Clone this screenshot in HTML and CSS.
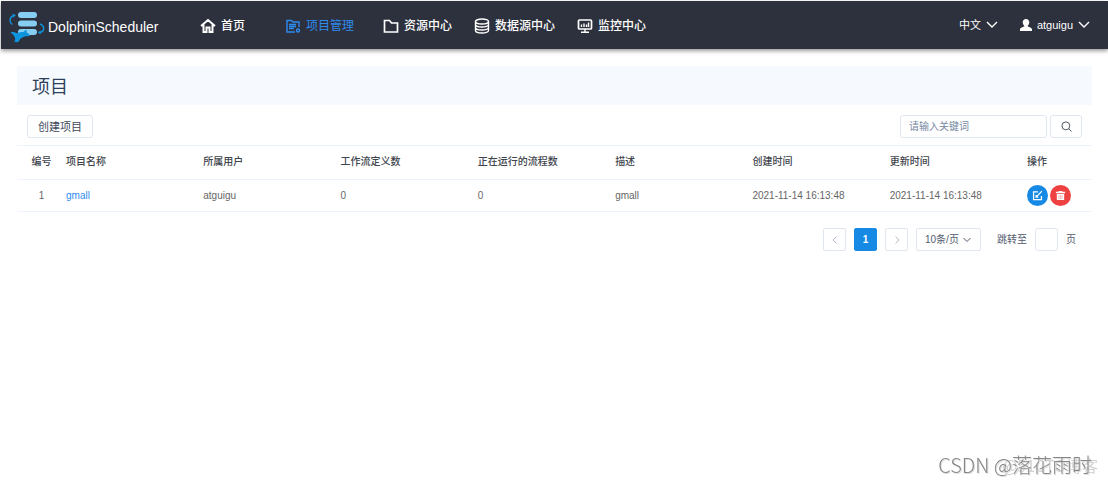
FILE: index.html
```html
<!DOCTYPE html>
<html lang="zh-CN">
<head>
<meta charset="utf-8">
<title>DolphinScheduler</title>
<meta name="viewport" content="width=device-width, initial-scale=1">
<link rel="stylesheet" href="styles.css">
</head>
<body>
<header class="topbar">
  <a class="brand" href="#">
    <svg class="brand-mark" viewBox="0 0 36 32" aria-hidden="true">
      <g fill="#86cdf2"><rect x="9" y="1" width="19" height="6" rx="3"/><rect x="9" y="9.500" width="19" height="6" rx="3"/><rect x="9" y="18" width="19" height="6" rx="3"/></g>
      <g fill="none" stroke="#0d94dc" stroke-width="1.400"><path d="M5 4.500C0 6 0 11.500 3.500 13.500"/><path d="M31 13c5 2 5 7.500-.5 8.500"/></g>
      <path fill="#0d94dc" d="M3.500 2.800l3.500 1.200-3 2.800zM31.500 19.500l-2.500 2 2.500 2z"/>
      <path fill="#0d94dc" d="M1.500 21.500c2.500-.8 4.500-.3 6 .8 2.500-1 4.500-1.300 7-1.300.8-1.200 2-2 3.500-2-.5.900-.6 1.700-.4 2.500 1.700.7 3 1.800 3.600 3.800-1.200-.3-2-.2-3 0-3.500.2-5.500 1.500-7.200 3-.5 1.500-1.500 2-2.500 3.200-.8-.6-1.800-.8-3.500-.7 1-1.200 1.300-2.300 1-3.800-1-2.500-2-4-4.500-5.500z"/>
    </svg>
    <span>DolphinScheduler</span>
  </a>
  <nav class="nav">
    <a class="nav-item nav-home" href="#">
      <svg class="icon" viewBox="0 0 16 16"><path d="M1 8l7-6 7 6M3.500 6.500V14h3v-4.500h3V14h3V6.500" stroke-width="2"/></svg>首页</a>
    <a class="nav-item nav-project active" href="#">
      <svg class="icon" viewBox="0 0 16 16"><path d="M14 9V4H8L6.500 2.500H2V14h8"/><path d="M4 6.500h7M4 8.500h7M4 10.500h5" stroke-width="1.300"/><circle cx="13" cy="12.500" r="1.500"/></svg>项目管理</a>
    <a class="nav-item" href="#">
      <svg class="icon" viewBox="0 0 16 16"><path d="M1.500 2.500h5L8.500 5h6v9h-13z" stroke-width="1.700"/></svg>资源中心</a>
    <a class="nav-item" href="#">
      <svg class="icon" viewBox="0 0 16 16"><ellipse cx="8" cy="3.500" rx="6.500" ry="2.500"/><path d="M1.500 3.500v9c0 3.300 13 3.300 13 0v-9M1.500 6.500c0 3.300 13 3.300 13 0M1.500 9.500c0 3.300 13 3.300 13 0"/></svg>数据源中心</a>
    <a class="nav-item" href="#">
      <svg class="icon" viewBox="0 0 16 16"><rect x="1.500" y="2" width="13" height="9" rx="1" stroke-width="1.700"/><path d="M4.500 9V6.500M7 9V5.500M9.500 9V6.500M11.500 9V4.500M8 11v3M4 14.200h8"/></svg>监控中心</a>
  </nav>
  <div class="account">
    <button class="menu" type="button">中文
      <svg class="caret" viewBox="0 0 12 8"><path d="M1 1l5 5 5-5"/></svg></button>
    <button class="menu" type="button">
      <svg class="person" viewBox="0 0 12 12"><path d="M6 0c2 0 3.300 1.300 3.300 3.300S8 6.500 7.500 7.200C8.500 8 12 8.500 12 10.500V12H0v-1.500C0 8.500 3.500 8 4.500 7.200 4 6.500 2.700 5.300 2.700 3.300S4 0 6 0z"/></svg>atguigu
      <svg class="caret" viewBox="0 0 12 8"><path d="M1 1l5 5 5-5"/></svg></button>
  </div>
</header>

<main class="page">
  <h1 class="title">项目</h1>
  <div class="toolbar">
    <button class="btn create" type="button">创建项目</button>
    <form class="search">
      <input class="field keyword" type="text" placeholder="请输入关键词" aria-label="请输入关键词">
      <button class="btn find" type="button" aria-label="搜索">
        <svg viewBox="0 0 12 12"><circle cx="5.300" cy="5.300" r="4.300"/><path d="M8.500 8.500l3 3"/></svg></button>
    </form>
  </div>
  <table class="projects">
    <colgroup><col class="col-no"><col><col><col><col><col><col><col><col class="col-ops"></colgroup>
    <thead>
      <tr><th>编号</th><th>项目名称</th><th>所属用户</th><th>工作流定义数</th><th>正在运行的流程数</th><th>描述</th><th>创建时间</th><th>更新时间</th><th>操作</th></tr>
    </thead>
    <tbody>
      <tr><td>1</td><td><a class="link" href="#">gmall</a></td><td>atguigu</td><td>0</td><td>0</td><td>gmall</td><td>2021-11-14 16:13:48</td><td>2021-11-14 16:13:48</td>
        <td><div class="ops">
          <button class="round edit" type="button" aria-label="编辑"><svg viewBox="0 0 12 12"><path d="M6.500 2H1.700v8.500h8.600V6.500M4.500 7.800L10.800 1.200M4.500 5.500v2.300h2.300"/></svg></button>
          <button class="round remove" type="button" aria-label="删除"><svg viewBox="0 0 12 12"><path fill="#fff" stroke="none" d="M4 1h4v1h3v1.600H1V2h3zM2 4.300h8V11H2z"/><path stroke="#f5a0a0" stroke-width=".8" d="M4.300 5.500v4.300M6 5.500v4.300M7.700 5.500v4.300"/></svg></button>
        </div></td></tr>
    </tbody>
  </table>
  <div class="pager">
    <button class="page-btn" type="button" aria-label="上一页"><svg viewBox="0 0 8 8"><path d="M5.500 0.500L2 4l3.500 3.500"/></svg></button>
    <button class="page-btn current" type="button">1</button>
    <button class="page-btn" type="button" aria-label="下一页"><svg viewBox="0 0 8 8"><path d="M2.500 0.500L6 4 2.500 7.500"/></svg></button>
    <div class="size-wrap">
      <select class="size" aria-label="每页条数"><option>10条/页</option></select>
      <svg class="size-caret" viewBox="0 0 8 8"><path d="M0.500 2L4 5.500 7.500 2"/></svg>
    </div>
    <label class="jump">跳转至 <input class="field page-no" type="text"> 页</label>
  </div>
</main>
<div class="watermark"><span class="mark-back">@51CTO博客</span><span class="mark-front">CSDN @落花雨时</span></div>
</body>
</html>
```

FILE: styles.css
```css
* { box-sizing: border-box; }
body {
  margin: 0;
  min-height: 100vh;
  background: #fff;
  color: #666;
  font: 10px/16px "Liberation Sans", "Noto Sans CJK SC", sans-serif;
}
button, input, select { font: inherit; color: inherit; margin: 0; }
button { cursor: pointer; }
a { color: inherit; text-decoration: none; }
svg { display: block; flex: none; fill: none; stroke: currentColor; }

.topbar {
  display: flex;
  align-items: center;
  height: 48px;
  margin: 1px 0 0 1px;
  padding: 0 18px 0 8px;
  background: #2d303d;
  color: #fff;
  box-shadow: 0 2px 4px rgba(0, 0, 0, .4);
}
.brand {
  display: flex;
  align-items: center;
  gap: 3px;
  width: 191px;
  font-size: 14px;
  line-height: 20px;
  padding-top: 3px;
}
.brand-mark { width: 36px; height: 32px; stroke: none; }
.nav { display: flex; gap: 22px; padding-top: 2px; font-size: 12px; font-weight: 500; }
.nav-item { display: flex; align-items: center; gap: 5px; }
.nav-home { margin-right: 18px; }
.nav-project { margin-right: 7px; }
.active { color: #2d8cf0; font-weight: 400; }
.icon { width: 16px; height: 16px; stroke-width: 1.4; }
.account { display: flex; gap: 22px; margin-left: auto; font-size: 11px; }
.menu {
  display: flex;
  align-items: center;
  gap: 5px;
  padding: 0;
  border: 0;
  background: none;
}
.caret { width: 12px; height: 8px; stroke-width: 1.4; }
.person { width: 12px; height: 12px; fill: #fff; stroke: none; }

.page { padding: 17px 16px 0 17px; }
.title {
  margin: 0;
  padding: 7px 15px 4px;
  background: #f6fafe;
  color: #2d4059;
  font-size: 18px;
  font-weight: 400;
  line-height: 28px;
}
.toolbar {
  display: flex;
  justify-content: space-between;
  padding: 10px 10px 7px;
}
.search { display: flex; gap: 3px; }
.btn, .field {
  height: 23px;
  border: 1px solid #e0e6f0;
  border-radius: 3px;
  background: #fff;
}
.btn { color: #40485b; }
.create { padding: 0 10px; font-size: 11px; }
.keyword { width: 147px; padding: 0 8px; }
.keyword::placeholder { color: #7588a3; opacity: 1; }
.find { display: grid; place-items: center; width: 32px; padding: 0; }
.find svg { width: 11px; height: 11px; }

.projects {
  width: 100%;
  table-layout: fixed;
  border-collapse: collapse;
  border-top: 1px solid #ecf3ff;
}
.col-no { width: 49px; }
.col-ops { width: 65px; }
.projects th, .projects td {
  padding: 0;
  border-bottom: 1px solid #ecf3ff;
  text-align: left;
  white-space: nowrap;
}
.projects th { height: 34px; color: #40444c; font-weight: 500; padding-bottom: 2px; }
.projects td { height: 32px; }
.projects th:first-child, .projects td:first-child { text-align: center; }
.link { color: #2d8cf0; }
.ops { display: flex; gap: 2px; }
.round {
  display: grid;
  place-items: center;
  width: 21px;
  height: 21px;
  padding: 0;
  border: 0;
  border-radius: 50%;
  color: #fff;
}
.round svg { width: 11px; height: 11px; stroke-width: 1.4; }
.edit { background: #1689e4; }
.remove { background: #ee4242; }

.pager {
  display: flex;
  justify-content: flex-end;
  align-items: center;
  gap: 8px;
  padding: 16px 16px 0;
  color: #515a6e;
}
.page-btn {
  display: grid;
  place-items: center;
  width: 23px;
  height: 23px;
  padding: 0;
  border: 1px solid #e0e6f0;
  border-radius: 2px;
  background: #fff;
  color: #b4bccc;
}
.page-btn svg, .size-caret { width: 8px; height: 8px; }
.current { border-color: #1689e4; background: #1689e4; color: #fff; font-weight: 700; }
.size-wrap { display: grid; align-items: center; width: 65px; }
.size {
  grid-area: 1 / 1;
  appearance: none;
  height: 23px;
  padding: 0 8px;
  border: 1px solid #e0e6f0;
  border-radius: 2px;
  background: #fff;
}
.size-caret { grid-area: 1 / 1; justify-self: end; margin-right: 10px; pointer-events: none; }
.jump { display: flex; align-items: center; gap: 8px; margin-left: 8px; }
.page-no { width: 23px; padding: 0 4px; }

.watermark {
  position: fixed;
  right: 10px;
  bottom: 6px;
  display: grid;
  justify-items: end;
  align-items: center;
  white-space: nowrap;
  pointer-events: none;
  font-family: "Noto Sans CJK SC", sans-serif;
}
.mark-back, .mark-front { grid-area: 1 / 1; }
.mark-back { color: #d2d2d2; font-size: 16px; }
.mark-front {
  margin-right: 6px;
  color: #888;
  font-size: 20px;
  font-weight: 300;
  line-height: 26px;
  text-shadow: 1px 1px 0 #ddd;
}
```
